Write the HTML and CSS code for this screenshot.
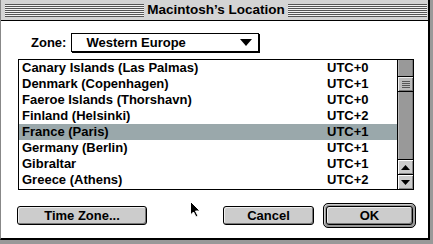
FILE: index.html
```html
<!DOCTYPE html>
<html lang="en">
<head>
    <meta charset="UTF-8">
    <title>Macintosh's Location</title>
    <link rel="stylesheet" href="styles.css">
</head>
<body>
    <div class="screen">
        <div class="window">
            <!-- Title bar -->
            <div class="titlebar">
                <span class="stripes"></span>
                <span class="title">Macintosh’s Location</span>
                <span class="stripes"></span>
            </div>

            <div class="content">
                <!-- Zone popup -->
                <div class="zone-row">
                    <span class="zone-label">Zone:</span>
                    <div class="popup">
                        <span>Western Europe</span>
                        <svg class="popup-arrow" width="12" height="7" viewBox="0 0 12 7">
                            <path d="M0 0 H12 L6 7 Z" fill="#000"/>
                        </svg>
                    </div>
                </div>

                <!-- City list -->
                <div class="list">
                    <ul class="rows">
                        <li class="row"><span class="city">Canary Islands (Las Palmas)</span><span class="utc">UTC+0</span></li>
                        <li class="row"><span class="city">Denmark (Copenhagen)</span><span class="utc">UTC+1</span></li>
                        <li class="row"><span class="city">Faeroe Islands (Thorshavn)</span><span class="utc">UTC+0</span></li>
                        <li class="row"><span class="city">Finland (Helsinki)</span><span class="utc">UTC+2</span></li>
                        <li class="row selected"><span class="city">France (Paris)</span><span class="utc">UTC+1</span></li>
                        <li class="row"><span class="city">Germany (Berlin)</span><span class="utc">UTC+1</span></li>
                        <li class="row"><span class="city">Gibraltar</span><span class="utc">UTC+1</span></li>
                        <li class="row"><span class="city">Greece (Athens)</span><span class="utc">UTC+2</span></li>
                    </ul>
                    <div class="scrollbar">
                        <div class="track short"></div>
                        <div class="thumb"><span></span><span></span><span></span><span></span></div>
                        <div class="track"></div>
                        <div class="arrow">
                            <svg width="9" height="5" viewBox="0 0 9 5"><path d="M4.5 0 L9 5 H0 Z" fill="#000"/></svg>
                        </div>
                        <div class="arrow">
                            <svg width="9" height="5" viewBox="0 0 9 5"><path d="M0 0 H9 L4.5 5 Z" fill="#000"/></svg>
                        </div>
                    </div>
                </div>

                <!-- Buttons -->
                <div class="buttons">
                    <button class="btn wide">Time Zone...</button>
                    <span class="spacer"></span>
                    <button class="btn cancel">Cancel</button>
                    <span class="default-ring"><button class="btn ok">OK</button></span>
                </div>
            </div>
        </div>

        <svg class="cursor" width="11" height="17" viewBox="0 0 11 17">
            <path d="M0.5 0.5 V14 L3.5 11 L6 16 L8 15 L5.5 10 H10 Z" fill="#000" stroke="#fff" stroke-width="1"/>
        </svg>
    </div>
</body>
</html>
```

FILE: styles.css
```css
/* Reset */
* {
    margin: 0;
    padding: 0;
    box-sizing: border-box;
}

body {
    width: 433px;
    height: 244px;
    overflow: hidden;
    background-color: #999;
    font-family: "Liberation Sans", Arial, sans-serif;
    font-weight: bold;
    font-size: 13px;
    color: #000;
}

.screen {
    position: relative;
    width: 433px;
    height: 244px;
}

/* Window frame */
.window {
    width: 430px;
    height: 240px;
    background-color: #fff;
    border-left: 1px solid #888;
    border-right: 2px solid #000;
    border-bottom: 2px solid #000;
}

.titlebar {
    display: flex;
    align-items: center;
    height: 21px;
    padding: 0 1px 0 4px;
    background-color: #d4d4d4;
    border-bottom: 1px solid #000;
}

.stripes {
    flex: 1;
    height: 13px;
    background: repeating-linear-gradient(to bottom, #555 0, #555 1px, #f2f2f2 1px, #f2f2f2 2px);
}

.title {
    padding: 0 3px;
    font-size: 13.5px;
    line-height: 20px;
    white-space: nowrap;
}

.content {
    display: flex;
    flex-direction: column;
    padding: 12px 0 0 17px;
}

/* Zone popup */
.zone-row {
    display: flex;
    align-items: center;
    gap: 5px;
    padding-left: 13px;
}

.popup {
    display: flex;
    align-items: center;
    justify-content: space-between;
    width: 188px;
    height: 19px;
    padding: 0 6px 0 14px;
    border: 1px solid #000;
    box-shadow: 1px 1px 0 #000;
}

/* List */
.list {
    display: flex;
    width: 396px;
    height: 131px;
    margin-top: 7px;
    border: 1px solid #000;
}

.rows {
    flex: 1;
    list-style: none;
}

.row {
    display: flex;
    height: 16px;
    line-height: 16px;
    padding-left: 3px;
}

.row.selected {
    background-color: #9aa8ab;
}

.city {
    width: 305px;
}

/* Scrollbar */
.scrollbar {
    display: flex;
    flex-direction: column;
    width: 16px;
    border-left: 1px solid #000;
    background-color: #999;
}

.track {
    flex: 1;
    border-left: 1px solid #bbb;
    border-right: 1px solid #777;
}

.track.short {
    flex: none;
    height: 16px;
}

.thumb {
    display: flex;
    flex-direction: column;
    align-items: center;
    justify-content: center;
    gap: 1px;
    height: 16px;
    background-color: #bbb;
    border-top: 1px solid #000;
    border-bottom: 1px solid #000;
    box-shadow: inset 1px 1px 0 #eee, inset -1px -1px 0 #777;
}

.thumb span {
    width: 8px;
    height: 1px;
    background-color: #555;
}

.arrow {
    display: flex;
    align-items: center;
    justify-content: center;
    height: 15px;
    background-color: #ccc;
    border-top: 1px solid #000;
    box-shadow: inset 1px 1px 0 #fff, inset -1px -1px 0 #888;
}

/* Buttons */
.buttons {
    display: flex;
    align-items: center;
    margin-top: 13px;
    padding-right: 12px;
}

.spacer {
    flex: 1;
}

.btn {
    height: 19px;
    font-family: inherit;
    font-weight: bold;
    font-size: 13px;
    color: #000;
    background-color: #ccc;
    border: 1px solid #000;
    border-radius: 3px;
    box-shadow: inset 1px 1px 0 #eee, inset -1px -1px 0 #777;
}

.wide {
    width: 130px;
    margin-left: -1px;
}

.cancel {
    width: 91px;
}

.default-ring {
    display: flex;
    margin-left: 9px;
    padding: 2px;
    border: 1px solid #000;
    border-radius: 5px;
    background-color: #999;
    box-shadow: inset 1px 1px 0 #ccc;
}

.ok {
    width: 87px;
}

/* Mouse pointer */
.cursor {
    position: absolute;
    left: 190px;
    top: 201px;
}
```
